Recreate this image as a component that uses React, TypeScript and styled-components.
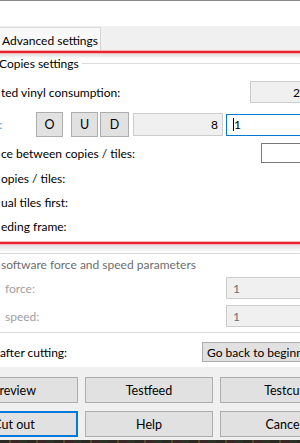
import React from "react";
import styled, { createGlobalStyle } from "styled-components";

const GlobalStyle = createGlobalStyle`
  html, body { margin: 0; padding: 0; }
  body {
    width: 300px;
    height: 443px;
    overflow: hidden;
    background: #ffffff;
    font-family: Lato, "Noto Sans", sans-serif;
    font-size: 12px;
    color: #000;
  }
`;

const Window = styled.div`
  width: 300px;
  height: 443px;
  overflow: hidden;
  display: flex;
  flex-direction: column;
  background: #fff;
`;

const TopLine = styled.div`
  height: 1px;
  background: #8a8a8a;
  flex: none;
`;

const TopGap = styled.div`
  height: 25px;
  flex: none;
`;

const TabStrip = styled.div`
  height: 24px;
  flex: none;
  background: #f0f0f0;
  display: flex;
  align-items: flex-end;
`;

const Tab = styled.div`
  height: 23px;
  width: 101px;
  box-sizing: border-box;
  background: #f9f9f9;
  border-top: 1px solid #dadada;
  border-right: 1px solid #d4d4d4;
  display: flex;
  align-items: center;
  padding: 2px 0 0 2px;
  white-space: nowrap;
`;

const RedEdge = styled.div`
  height: 4px;
  flex: none;
  background: linear-gradient(
    #f6b4b7 0 1px,
    #e8222e 1px 3px,
    #f6b4b7 3px 4px
  );
`;

const Shadow = styled.div<{ $h: number }>`
  height: ${(p) => p.$h}px;
  flex: none;
  background: linear-gradient(#e0e0e0, #f9f9f9);
`;

const LegendRow = styled.div`
  height: 12px;
  flex: none;
  display: flex;
  align-items: center;
  line-height: 12px;
  white-space: nowrap;
`;

const LegendText = styled.span`
  margin-left: -1px;
  padding-right: 3px;
`;

const LegendLine = styled.div`
  flex: 1;
  height: 1px;
  background: #dcdcdc;
  margin-top: -1px;
`;

const Row = styled.div<{ $h: number; $mt: number; $pl?: number }>`
  height: ${(p) => p.$h}px;
  margin-top: ${(p) => p.$mt}px;
  flex: none;
  display: flex;
  align-items: center;
  padding-left: ${(p) => p.$pl ?? 1}px;
  white-space: nowrap;
`;

const Label = styled.span<{ $color?: string }>`
  flex: 1;
  color: ${(p) => p.$color ?? "#000"};
`;

const Box = styled.div<{
  $w: number;
  $h: number;
  $variant: "read" | "edit" | "focus" | "disabled";
  $align?: "left" | "right";
}>`
  flex: none;
  box-sizing: border-box;
  width: ${(p) => p.$w}px;
  height: ${(p) => p.$h}px;
  display: flex;
  align-items: center;
  justify-content: ${(p) => (p.$align === "right" ? "flex-end" : "flex-start")};
  padding: 0 5px 0 6px;
  background: ${(p) =>
    p.$variant === "read" || p.$variant === "disabled" ? "#f0f0f0" : "#fff"};
  border: 1px solid
    ${(p) =>
      p.$variant === "focus"
        ? "#0078d7"
        : p.$variant === "edit"
        ? "#7a7a7a"
        : "#cccccc"};
  color: ${(p) => (p.$variant === "disabled" ? "#6d6d6d" : "#000")};
`;

const Caret = styled.span`
  display: inline-block;
  width: 1px;
  height: 13px;
  background: #000;
  margin-right: 0px;
`;

const ModeLabel = styled.span`
  width: 36px;
  flex: none;
  margin-left: -5px;
  color: #3a9ee6;
`;

const SmallButton = styled.div<{ $w: number; $ml: number }>`
  flex: none;
  box-sizing: border-box;
  width: ${(p) => p.$w}px;
  height: 25px;
  margin-left: ${(p) => p.$ml}px;
  background: #e1e1e1;
  border: 1px solid #adadad;
  display: flex;
  align-items: center;
  justify-content: center;
  font-size: 12.5px;
`;

const Group2 = styled.div`
  margin-top: 2px;
  flex: none;
  border-top: 1px solid #dcdcdc;
  border-bottom: 1px solid #dcdcdc;
  padding-bottom: 5px;
  display: flex;
  flex-direction: column;
`;

const WideButton = styled.div`
  flex: none;
  box-sizing: border-box;
  width: 110px;
  height: 20px;
  background: #e1e1e1;
  border: 1px solid #adadad;
  display: flex;
  align-items: center;
  padding-left: 4px;
  white-space: nowrap;
`;

const ButtonArea = styled.div`
  flex: 1;
  margin-top: 5px;
  background: #f0f0f0;
  padding: 10px 0 3px;
  overflow: hidden;
`;

const ButtonGrid = styled.div`
  display: grid;
  grid-template-columns: 128px 128px 128px;
  grid-auto-rows: 26px;
  column-gap: 7px;
  row-gap: 8px;
  margin-left: -50px;
`;

const DlgButton = styled.div<{ $focused?: boolean }>`
  box-sizing: border-box;
  background: #e1e1e1;
  border: 1px solid ${(p) => (p.$focused ? "#0078d7" : "#adadad")};
  box-shadow: ${(p) => (p.$focused ? "inset 0 0 0 1px #0078d7" : "none")};
  display: flex;
  align-items: center;
  justify-content: center;
  white-space: nowrap;
  font-size: 12.5px;
`;

const Desktop = styled.div`
  height: 3px;
  flex: none;
  background: repeating-linear-gradient(
    90deg,
    #2b2a22 0 9px,
    #54482a 9px 11px,
    #3a2626 11px 19px,
    #2a3326 19px 27px
  );
`;

export default function App() {
  return (
    <>
      <GlobalStyle />
      <Window>
        <TopLine />
        <TopGap />
        <TabStrip>
          <Tab>Advanced settings</Tab>
        </TabStrip>
        <RedEdge />
        <Shadow $h={4} />
        <LegendRow>
          <LegendText>Copies settings</LegendText>
          <LegendLine />
        </LegendRow>
        <Row $h={22} $mt={11}>
          <Label>ted vinyl consumption:</Label>
          <Box $w={56} $h={22} $variant="read" $align="right" style={{ marginRight: -6 }}>
            2
          </Box>
        </Row>
        <Row $h={25} $mt={9} $pl={0}>
          <ModeLabel>t:</ModeLabel>
          <SmallButton $w={27} $ml={5}>O</SmallButton>
          <SmallButton $w={27} $ml={8}>U</SmallButton>
          <SmallButton $w={29} $ml={2}>D</SmallButton>
          <Box $w={90} $h={23} $variant="read" $align="right" style={{ marginLeft: 4, paddingRight: 4 }}>
            8
          </Box>
          <Box $w={80} $h={22} $variant="focus" style={{ marginLeft: 3 }}>
            <Caret />1
          </Box>
        </Row>
        <Row $h={20} $mt={6}>
          <Label>ce between copies / tiles:</Label>
          <Box $w={46} $h={20} $variant="edit" style={{ marginRight: -7 }} />
        </Row>
        <Row $h={24} $mt={3}>
          <Label>opies / tiles:</Label>
        </Row>
        <Row $h={24} $mt={0}>
          <Label>ual tiles first:</Label>
        </Row>
        <Row $h={24} $mt={0}>
          <Label>eding frame:</Label>
        </Row>
        <Row $h={0} $mt={3} />
        <RedEdge />
        <Shadow $h={6} />
        <Group2>
          <Row $h={20} $mt={0}>
            <Label $color="#6d6d6d">software force and speed parameters</Label>
          </Row>
          <Row $h={22} $mt={3} $pl={5}>
            <Label $color="#a0a0a0">force:</Label>
            <Box $w={80} $h={22} $variant="disabled" style={{ marginRight: -6 }}>
              1
            </Box>
          </Row>
          <Row $h={22} $mt={6} $pl={5}>
            <Label $color="#a0a0a0">speed:</Label>
            <Box $w={80} $h={22} $variant="disabled" style={{ marginRight: -6 }}>
              1
            </Box>
          </Row>
        </Group2>
        <Row $h={20} $mt={9} $pl={0}>
          <Label>after cutting:</Label>
          <WideButton style={{ marginRight: -12 }}>Go back to beginning</WideButton>
        </Row>
        <ButtonArea>
          <ButtonGrid>
            <DlgButton>Preview</DlgButton>
            <DlgButton>Testfeed</DlgButton>
            <DlgButton>Testcut</DlgButton>
            <DlgButton $focused>Cut out</DlgButton>
            <DlgButton>Help</DlgButton>
            <DlgButton>Cancel</DlgButton>
          </ButtonGrid>
        </ButtonArea>
        <Desktop />
      </Window>
    </>
  );
}
